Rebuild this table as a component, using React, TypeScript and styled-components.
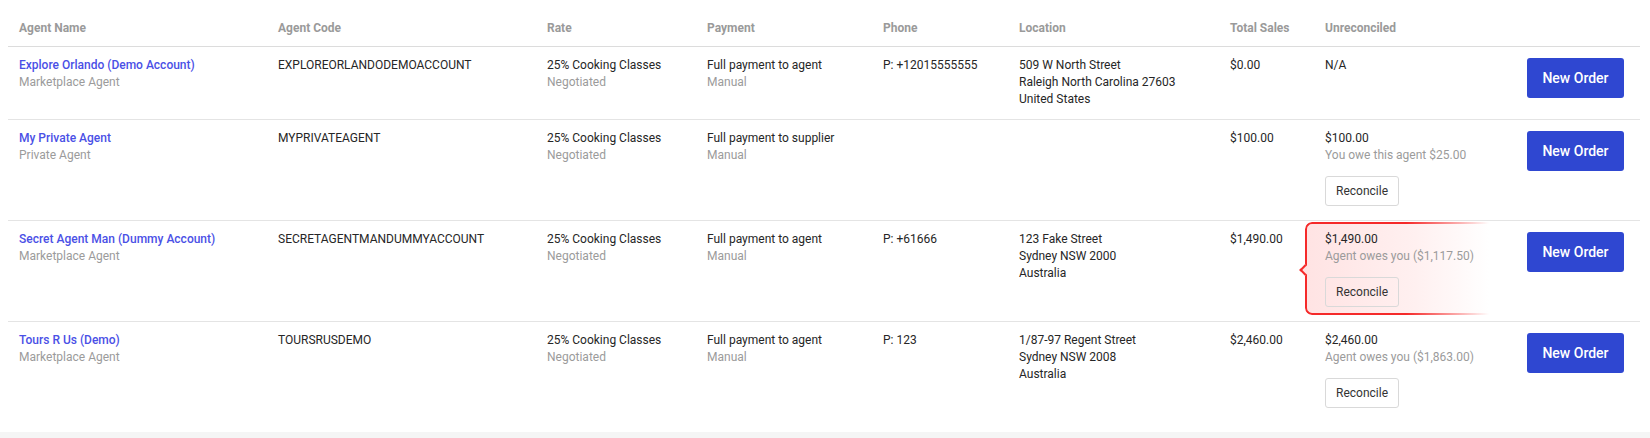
import React from "react";
import styled, { createGlobalStyle } from "styled-components";

const GlobalStyle = createGlobalStyle`
  html, body {
    margin: 0;
    padding: 0;
    background: #f5f5f5;
    font-family: Roboto, "Noto Sans", "Liberation Sans", Arial, sans-serif;
    -webkit-font-smoothing: antialiased;
  }
  * { box-sizing: border-box; }
`;

const COLS = "259px 269px 160px 176px 136px 211px 95px 197px 129px";

const Card = styled.div`
  background: #ffffff;
  padding: 0 10px 10px 8px;
`;

const Table = styled.div`
  display: flex;
  flex-direction: column;
`;

const HeaderRow = styled.div`
  display: grid;
  grid-template-columns: ${COLS};
  border-bottom: 1px solid #dcdcdc;
`;

const HeadCell = styled.div`
  padding: 20px 11px 9px;
  font-size: 12px;
  line-height: 17px;
  font-weight: 700;
  color: #9a9a9a;
`;

const Row = styled.div<{ $last?: boolean }>`
  display: grid;
  grid-template-columns: ${COLS};
  border-bottom: ${(p) => (p.$last ? "none" : "1px solid #e4e4e4")};
`;

const Cell = styled.div`
  position: relative;
  padding: 10px 11px 11px;
  font-size: 12px;
  line-height: 17px;
  color: #262626;
  display: flex;
  flex-direction: column;
  align-items: flex-start;
`;

const ActionCell = styled(Cell)`
  padding: 11px 16px 12px 16px;
  align-items: flex-end;
`;

const NameLink = styled.a`
  color: #4a50e6;
  font-weight: 500;
  text-decoration: none;
  cursor: pointer;
`;

const Sub = styled.span`
  color: #9b9b9b;
`;

const Line = styled.span``;

const ReconcileButton = styled.button`
  position: relative;
  margin: 12px 0 3px;
  width: 74px;
  height: 30px;
  border: 1px solid #d9d9d9;
  border-radius: 3px;
  background: transparent;
  font-family: inherit;
  font-size: 12px;
  color: #333;
  cursor: pointer;
`;

const NewOrderButton = styled.button`
  width: 97px;
  height: 40px;
  border: none;
  border-radius: 3px;
  background: #2f47d1;
  color: #ffffff;
  font-family: inherit;
  font-size: 14px;
  font-weight: 500;
  cursor: pointer;
`;

const Highlight = styled.div`
  position: absolute;
  left: -9px;
  top: 1px;
  right: 22px;
  bottom: 6px;
  border-radius: 7px;
  background: linear-gradient(to right, #ffe3e3 0%, #fff0f0 60%, rgba(255, 255, 255, 0) 100%);
  pointer-events: none;

  &::before {
    content: "";
    position: absolute;
    inset: 0;
    border: 2px solid #f52a2a;
    border-right: none;
    border-radius: 7px 0 0 7px;
    -webkit-mask-image: linear-gradient(to right, #000 0%, #000 55%, transparent 100%);
    mask-image: linear-gradient(to right, #000 0%, #000 55%, transparent 100%);
  }

  &::after {
    content: "";
    position: absolute;
    left: -4px;
    top: 50%;
    width: 6px;
    height: 6px;
    margin-top: -3px;
    background: #ffe3e3;
    border-left: 2px solid #f52a2a;
    border-bottom: 2px solid #f52a2a;
    transform: rotate(45deg);
  }
`;

const CellContent = styled.div`
  position: relative;
  display: flex;
  flex-direction: column;
  align-items: flex-start;
`;

type Agent = {
  name: string;
  kind: string;
  code: string;
  payment: string;
  phone?: string;
  location: string[];
  total: string;
  unreconciled: string;
  note?: string;
  reconcile: boolean;
  highlight?: boolean;
};

const agents: Agent[] = [
  {
    name: "Explore Orlando (Demo Account)",
    kind: "Marketplace Agent",
    code: "EXPLOREORLANDODEMOACCOUNT",
    payment: "Full payment to agent",
    phone: "P: +12015555555",
    location: ["509 W North Street", "Raleigh North Carolina 27603", "United States"],
    total: "$0.00",
    unreconciled: "N/A",
    reconcile: false,
  },
  {
    name: "My Private Agent",
    kind: "Private Agent",
    code: "MYPRIVATEAGENT",
    payment: "Full payment to supplier",
    location: [],
    total: "$100.00",
    unreconciled: "$100.00",
    note: "You owe this agent $25.00",
    reconcile: true,
  },
  {
    name: "Secret Agent Man (Dummy Account)",
    kind: "Marketplace Agent",
    code: "SECRETAGENTMANDUMMYACCOUNT",
    payment: "Full payment to agent",
    phone: "P: +61666",
    location: ["123 Fake Street", "Sydney NSW 2000", "Australia"],
    total: "$1,490.00",
    unreconciled: "$1,490.00",
    note: "Agent owes you ($1,117.50)",
    reconcile: true,
    highlight: true,
  },
  {
    name: "Tours R Us (Demo)",
    kind: "Marketplace Agent",
    code: "TOURSRUSDEMO",
    payment: "Full payment to agent",
    phone: "P: 123",
    location: ["1/87-97 Regent Street", "Sydney NSW 2008", "Australia"],
    total: "$2,460.00",
    unreconciled: "$2,460.00",
    note: "Agent owes you ($1,863.00)",
    reconcile: true,
  },
];

const headers = [
  "Agent Name",
  "Agent Code",
  "Rate",
  "Payment",
  "Phone",
  "Location",
  "Total Sales",
  "Unreconciled",
  "",
];

export default function App() {
  return (
    <>
      <GlobalStyle />
      <Card>
        <Table>
          <HeaderRow>
            {headers.map((h, i) => (
              <HeadCell key={i}>{h}</HeadCell>
            ))}
          </HeaderRow>
          {agents.map((a, i) => (
            <Row key={a.code} $last={i === agents.length - 1}>
              <Cell>
                <NameLink>{a.name}</NameLink>
                <Sub>{a.kind}</Sub>
              </Cell>
              <Cell>
                <Line>{a.code}</Line>
              </Cell>
              <Cell>
                <Line>25% Cooking Classes</Line>
                <Sub>Negotiated</Sub>
              </Cell>
              <Cell>
                <Line>{a.payment}</Line>
                <Sub>Manual</Sub>
              </Cell>
              <Cell>{a.phone && <Line>{a.phone}</Line>}</Cell>
              <Cell>
                {a.location.map((l) => (
                  <Line key={l}>{l}</Line>
                ))}
              </Cell>
              <Cell>
                <Line>{a.total}</Line>
              </Cell>
              <Cell>
                {a.highlight && <Highlight />}
                <CellContent>
                  <Line>{a.unreconciled}</Line>
                  {a.note && <Sub>{a.note}</Sub>}
                  {a.reconcile && <ReconcileButton>Reconcile</ReconcileButton>}
                </CellContent>
              </Cell>
              <ActionCell>
                <NewOrderButton>New Order</NewOrderButton>
              </ActionCell>
            </Row>
          ))}
        </Table>
      </Card>
    </>
  );
}
